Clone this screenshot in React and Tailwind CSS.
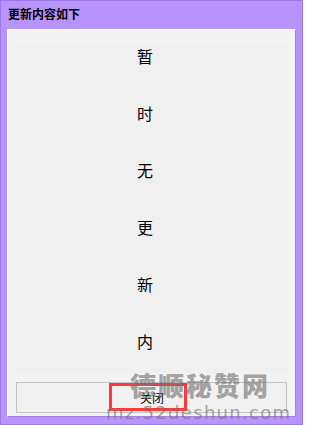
import React from "react";

const cjk = { fontFamily: '"Noto Sans CJK SC", "Microsoft YaHei", sans-serif' };

export default function App() {
  const chars = ["暂", "时", "无", "更", "新", "内"];
  return (
    <div className="relative w-[303px] h-[425px] bg-[#b794f9] border border-[#9d78ea] flex flex-col overflow-hidden" style={cjk}>
      <div className="h-[28px] shrink-0 pl-[7px] pt-[5px] text-[12px] leading-[16px] font-bold text-black">
        更新内容如下
      </div>
      <div className="mx-[6px] flex-1 mb-[7px] bg-[#f3f3f3] border border-t-white border-l-white border-r-[#a27fe6] border-b-[#a27fe6] flex flex-col px-[8px] pt-[16px]">
        <div className="h-[327px] shrink-0 bg-[#f0f0f0] flex flex-col gap-[39px] pt-[1px] pl-[121px]">
          {chars.map((c) => (
            <div key={c} className="text-[16px] leading-[18px] text-black">{c}</div>
          ))}
        </div>
        <div className="mt-[9px] h-[31px] shrink-0 border border-[#c4c4c4] bg-[#f1f1f1] flex items-center justify-center text-[12px] text-black pl-[1px]">
          关闭
        </div>
      </div>
      {/* red highlight */}
      <div className="absolute left-[108px] top-[382px] w-[78px] h-[28px] border-[3px] border-[#ff3a3a]"></div>
      {/* watermark */}
      <div className="absolute left-[129px] top-[367px] text-[26px] leading-[34px] font-black tracking-[2px] text-[rgba(115,115,115,0.65)] whitespace-nowrap">
        德顺秘赞网
      </div>
      <div className="absolute left-[105px] top-[401px] text-[18px] leading-[22px] tracking-[1.3px] text-[rgba(115,115,115,0.65)] whitespace-nowrap" style={{ fontFamily: '"DejaVu Sans", sans-serif' }}>
        mz.52deshun.com
      </div>
    </div>
  );
}
